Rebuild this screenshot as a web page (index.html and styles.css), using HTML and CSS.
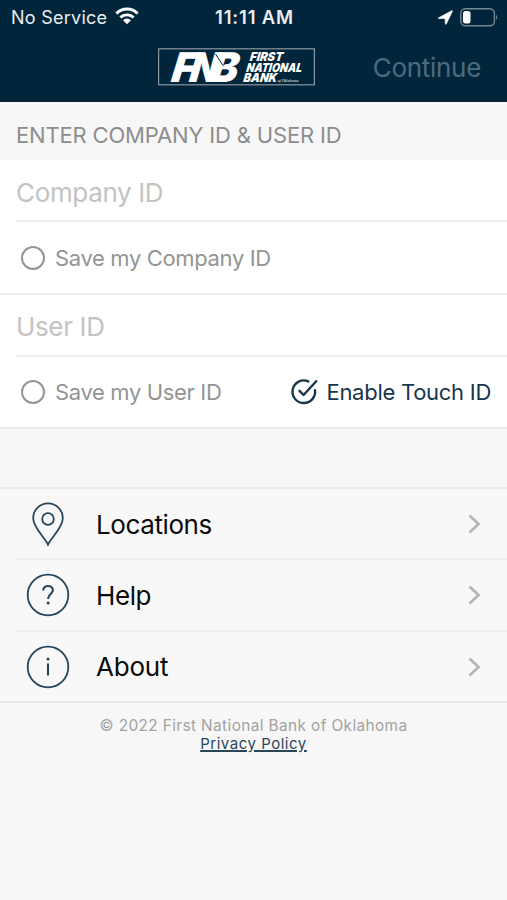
FILE: index.html
```html
<!DOCTYPE html>
<html lang="en">
<head>
<meta charset="utf-8">
<title>First National Bank of Oklahoma</title>
<link rel="stylesheet" href="styles.css">
</head>
<body>
<header class="top">
  <div class="status">
    <div class="carrier"><span class="carrier-name">No Service</span>
      <svg class="wifi" width="24" height="18" viewBox="0 0 24 18"><g fill="none" stroke="#fff" stroke-width="2.9"><path d="M1.4 6.6C7.2.5 16.800.5 22.600 6.600"/><path d="M5.400 10.600C9 6.900 15 6.900 18.600 10.600"/></g><path d="M8 13.300Q12 9.900 16 13.300L12 17.300Z" fill="#fff"/></svg>
    </div>
    <span class="clock">11:11 AM</span>
    <div class="indicators">
      <svg width="15" height="15" viewBox="0 0 15 15"><path d="M.3 7.900L13.700.7Q14.700.4 14.300 1.500L8.300 14Q7.500 15 7.300 13.800L7 8.600L1 8.500Q-.2 8.400.3 7.900Z" fill="#fff" stroke="#fff" stroke-width=".6"/></svg>
      <svg width="38" height="19" viewBox="0 0 38 19"><rect x=".8" y=".8" width="33.600" height="17" rx="4.500" fill="none" stroke="#758892" stroke-width="1.400"/><rect x="3" y="3" width="7.500" height="12.600" rx="2.500" fill="#fff"/><path d="M36 6.500Q38.400 9.300 36 12Z" fill="#758892"/></svg>
    </div>
  </div>
  <div class="nav">
    <svg class="logo" width="157" height="38" viewBox="0 0 157 38">
      <rect x=".6" y=".8" width="155.800" height="36" fill="none" stroke="#8998a1" stroke-width="1.200"/>
      <g class="logo-text">
        <text class="mark" transform="translate(12.500 33.500) skewX(-8)" textLength="24" lengthAdjust="spacingAndGlyphs">F</text>
        <text class="mark" transform="translate(30.500 33.500) skewX(-8)" textLength="29" lengthAdjust="spacingAndGlyphs">N</text>
        <text class="mark" transform="translate(52 33.500) skewX(-8)" textLength="27" lengthAdjust="spacingAndGlyphs">B</text>
        <path d="M57.500 6L65 17.500L69 14" fill="none" stroke="#01263b" stroke-width="1"/>
        <text class="name" transform="translate(91.500 13) skewX(-8)" textLength="33" lengthAdjust="spacingAndGlyphs">FIRST</text>
        <text class="name" transform="translate(88 23.600) skewX(-8)" textLength="55.500" lengthAdjust="spacingAndGlyphs">NATIONAL</text>
        <text class="name" transform="translate(85 34.300) skewX(-8)" textLength="33.500" lengthAdjust="spacingAndGlyphs">BANK</text>
        <text class="state" transform="translate(119.500 34)" textLength="21" lengthAdjust="spacingAndGlyphs">of Oklahoma</text>
      </g>
    </svg>
    <span class="continue">Continue</span>
  </div>
</header>
<main>
  <h1 class="heading"><span>ENTER COMPANY ID &amp; USER ID</span></h1>
  <section class="field">
    <div class="input"><span>Company ID</span></div>
    <div class="options">
      <span class="choice"><i class="radio"></i><span>Save my Company ID</span></span>
    </div>
  </section>
  <section class="field">
    <div class="input"><span>User ID</span></div>
    <div class="options">
      <span class="choice"><i class="radio"></i><span>Save my User ID</span></span>
      <span class="touch">
        <svg width="28" height="28" viewBox="0 0 28 28" fill="none" stroke="#17364a" stroke-width="2.400" stroke-linecap="round" stroke-linejoin="round"><path d="M18.300 3.400A11.300 11.300 0 1 0 25 12.200"/><path d="M9.500 12.800L13.600 17L26.200 3.200"/></svg>
        <span class="touch-label">Enable Touch ID</span>
      </span>
    </div>
  </section>
  <nav class="menu">
    <div class="item">
      <svg class="icon" width="44" height="44" viewBox="0 0 44 44"><path d="M22 42.500C19 36 7.200 25.500 7.200 16.200A14.800 14.800 0 0 1 36.800 16.200C36.800 25.500 25 36 22 42.500Z"/><circle cx="22" cy="17" r="5.800"/></svg>
      <span class="label">Locations</span>
      <svg class="chevron" width="14" height="22" viewBox="0 0 14 22"><path d="M2.500 2.500L11.500 11L2.500 19.500"/></svg>
    </div>
    <div class="item">
      <svg class="icon" width="44" height="44" viewBox="0 0 44 44"><circle cx="22" cy="22" r="20.300"/><path class="glyph" d="M17.200 17.600C17.200 11.400 26.900 11.500 26.900 17.300C26.900 21 22.100 21.200 22.100 26"/><circle class="dot" cx="22.100" cy="30" r="1.500"/></svg>
      <span class="label">Help</span>
      <svg class="chevron" width="14" height="22" viewBox="0 0 14 22"><path d="M2.500 2.500L11.500 11L2.500 19.500"/></svg>
    </div>
    <div class="item">
      <svg class="icon" width="44" height="44" viewBox="0 0 44 44"><circle cx="22" cy="22" r="20.300"/><path class="glyph" d="M22 18.500V30.500"/><circle class="dot" cx="22" cy="14" r="1.500"/></svg>
      <span class="label about">About</span>
      <svg class="chevron" width="14" height="22" viewBox="0 0 14 22"><path d="M2.500 2.500L11.500 11L2.500 19.500"/></svg>
    </div>
  </nav>
</main>
<footer class="legal">
  <span class="copyright">© 2022 First National Bank of Oklahoma</span>
  <a class="privacy">Privacy Policy</a>
</footer>
</body>
</html>
```
FILE: styles.css
```css
* { box-sizing: border-box; }
body {
  margin: 0;
  min-height: 900px;
  background: #f7f7f7;
  font-family: Inter, "Liberation Sans", sans-serif;
  white-space: nowrap;
}
svg { display: block; flex: none; overflow: visible; }
.top { height: 102px; background: #01263b; border-bottom: 1px solid #10283a; }
.status {
  display: grid;
  grid-template-columns: 1fr auto 1fr;
  align-items: center;
  height: 34px;
  padding: 0 9px 0 11px;
  color: #e9edef;
  font-size: 18px;
}
.carrier { display: flex; align-items: center; gap: 8px; }
.carrier-name { letter-spacing: 0.25px; }
.wifi { margin-top: -2px; }
.clock { font-weight: 600; font-size: 18.5px; letter-spacing: 0.8px; }
.indicators { display: flex; justify-content: flex-end; align-items: center; gap: 7px; }
.nav {
  display: grid;
  grid-template-columns: 158px 157px 1fr;
  padding: 14px 26px 0 0;
}
.logo { grid-column: 2; }
.logo-text { fill: #fff; font-weight: 900; font-style: italic; }
.mark { font-size: 41px; }
.name { font-size: 12.3px; }
.state { font: italic 400 4.5px "Liberation Serif", serif; }
.continue { justify-self: end; margin-top: 4px; color: #4d6b7f; font-size: 26px; line-height: 32px; letter-spacing: -0.3px; }
.heading {
  display: flex;
  align-items: center;
  height: 58px;
  margin: 0;
  padding: 7px 16px 0;
  color: #8d8d8d;
  font-size: 22px;
  font-weight: 400;
  letter-spacing: -0.17px;
}
.field { height: 134.5px; background: #fff; border-bottom: 2px solid #ececec; }
.input {
  display: flex;
  align-items: center;
  height: 62px;
  margin-left: 16px;
  padding-top: 4px;
  border-bottom: 2px solid #ececec;
  color: #c3c3c3;
  font-size: 26px;
  letter-spacing: -0.35px;
}
.options { display: flex; align-items: center; justify-content: space-between; height: 71px; padding: 0 16px 0 21px; font-size: 22px; letter-spacing: -0.35px; }
.choice, .touch { display: flex; align-items: center; }
.choice { gap: 10px; color: #949494; }
.radio { width: 24px; height: 24px; border: 2.5px solid #949494; border-radius: 50%; }
.touch { gap: 8px; color: #17364a; }
.touch-label { letter-spacing: -0.27px; }
.menu { margin-top: 58px; border-top: 2px solid #ebebeb; border-bottom: 2px solid #e8e8e8; background: #f8f8f8; }
.item { display: flex; align-items: center; height: 71.3px; margin-left: 16px; padding: 1px 26px 0 10px; border-bottom: 2px solid #ededed; }
.item:last-child { height: 69px; border-bottom: 0; }
.icon { fill: none; stroke: #24455a; stroke-width: 1.8; }
.glyph { stroke-width: 2.1; }
.dot { fill: #24455a; stroke: none; }
.label { margin-left: 26px; color: #0b0b0b; font-size: 26px; letter-spacing: -0.4px; }
.about { letter-spacing: -0.2px; }
.chevron { margin-left: auto; fill: none; stroke: #b6b6b6; stroke-width: 2.8; }
.legal { display: flex; flex-direction: column; align-items: center; padding-top: 14px; line-height: 18px; color: #a2a2a2; }
.copyright { font-size: 15.4px; letter-spacing: 0.38px; }
.privacy { color: #294759; font-size: 15px; letter-spacing: 0.52px; text-decoration: underline; text-decoration-thickness: 1.5px; }
```
